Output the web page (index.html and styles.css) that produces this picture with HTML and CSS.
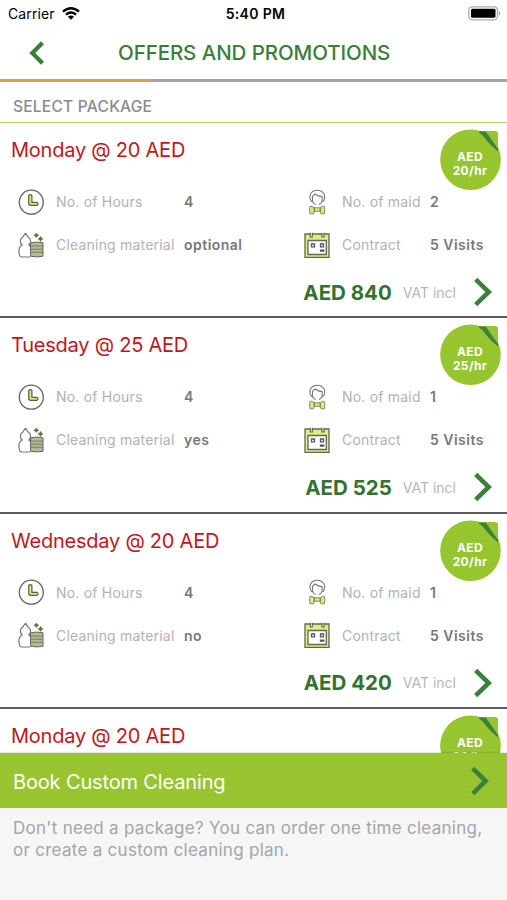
FILE: index.html
```html
<!DOCTYPE html>
<html lang="en">
<head>
<meta charset="utf-8">
<title>Offers and Promotions</title>
<link rel="stylesheet" href="styles.css">
</head>
<body>
<svg class="sprite" aria-hidden="true">
  <symbol id="clock" viewBox="0 0 26 26">
    <circle cx="13.3" cy="13.2" r="12" fill="#fff" stroke="#626262" stroke-width="1.3"/>
    <path d="M10.700 6.700q1.500-2.200 3.200 0v6.600h5q2.300 1.300 0 3h-6.200q-2 0-2-2z" fill="#dce96f" stroke="#5b5d49" stroke-width="1.200" stroke-linejoin="round"/>
  </symbol>
  <symbol id="material" viewBox="0 0 26 26">
    <path d="M7.500 1 4.600 5.300C2 6.500 1.500 11 4.300 13 1 14.300.6 19 1.300 22.500q.4 2.500 2.500 2.500h8.500M7.500 1l2.900 4.300c2.600 1.200 3.100 5.700.3 7.700q1.500.7 1.900 2" fill="none" stroke="#777" stroke-width="1.200" stroke-linejoin="round"/>
    <path d="M12.600 10.800q6-1.500 12.400 0v13.500q-6 1.200-12.400 0z" fill="#b4b997" stroke="#65675a"/>
    <path d="M12.800 14h12M12.800 17.200h12M12.800 20.300h12" stroke="#74776a" stroke-width=".9"/>
    <path d="M18.300 1l1 1.300 1.500 1-1.500.9-1 1.500-1-1.500-1.500-.9 1.500-1zM22.500 4.300l1 1.600 1.600 1-1.600 1-1 1.700-1-1.700-1.600-1 1.600-1z" fill="#63713a" stroke="#59623f" stroke-width=".4"/>
  </symbol>
  <symbol id="maid" viewBox="0 0 26 26">
    <path d="M7.800 12.800Q4.800 9 6.500 5 8.500 1.200 13.200 1.200T20 5q1.700 4-1 7.800M8.500 11V7.300L11 5q3 2.300 7.200 2.600V11M8.300 11q.4 3.500 3.400 4.500M18.300 11q-.4 3.500-3.400 4.500" fill="none" stroke="#777" stroke-width="1.100" stroke-linejoin="round"/>
    <path d="M6 17.500q2-1.200 4 1.300h6.400q2-2.500 4-1.300.9 2.500 0 7.300H17l-.9-2.600h-5.700l-.9 2.600H6q-.9-4.500 0-7.300z" fill="#dce879" stroke="#888a6b"/>
    <path d="M10.200 18.500v4M16.200 18.500v4" stroke="#686b54" stroke-width="1.100"/>
  </symbol>
  <symbol id="calendar" viewBox="0 0 26 26">
    <path d="M1 2h24v23.500H1z" fill="#e0ed80" stroke="#65674c" stroke-width="1.300"/>
    <path d="M4 8.500h18.300v14H4z" fill="#fff" stroke="#66665c" stroke-width="1.300"/>
    <path d="M6.300.7v4.300h2V.7M18 .7v4.300h2V.7" fill="#fff" stroke="#626650" stroke-width="1.200"/>
    <path d="M7.500 12h3v2.900h-3zM16.500 12h3v2.900h-3zM16.500 18.200h3.200v.9h-3.200z" fill="#fff" stroke="#555" stroke-width="1.300"/>
  </symbol>
  <symbol id="chevron" viewBox="0 0 18 30">
    <path d="M1.700 2.300 14.700 15 1.700 27.700" fill="none" stroke="currentColor" stroke-width="4.600"/>
  </symbol>
  <symbol id="badge" viewBox="0 0 61 61">
    <path d="M37 2h17.500q3.500 0 3.500 3.500V24z" fill="#96c52f"/>
    <circle cx="30.500" cy="30.700" r="30.300" fill="#96c52f"/>
    <path d="M38 2.500h8L58 17v5.500Q50 15.500 47.500 12.500 43 6 38 2.500z" fill="#3f803d"/>
    <path d="M45.500 2h9q3.500 0 3.500 3.500V20z" fill="#96c52f"/>
  </symbol>
</svg>

<div class="screen">
  <header>
    <div class="status">
      <div class="carrier">Carrier
        <svg class="wifi" viewBox="0 0 18 13"><path d="M1 4.700Q9-2.200 17 4.700M3.900 7.700q5.100-4.300 10.200 0" fill="none" stroke="#000" stroke-width="2.300"/><path d="M5.900 9.700q3.100-2.500 6.200 0L9 12.700z"/></svg>
      </div>
      <div class="time">5:40 PM</div>
      <svg class="battery" viewBox="0 0 33 15"><rect x=".8" y=".8" width="28.700" height="13" rx="3.500" fill="#fff" stroke="#aaa" stroke-width="1.300"/><rect x="3" y="2.800" width="24.500" height="9" rx="1.500"/><path d="M31 5q2 2.300 0 4.600z" fill="#888"/></svg>
    </div>
    <nav>
      <svg class="back" viewBox="0 0 16 24"><path d="M14.500 1.700 4.300 12l10.200 10.300" fill="none" stroke="currentColor" stroke-width="4.200"/></svg>
      <h1>OFFERS AND PROMOTIONS</h1>
    </nav>
    <div class="progress"><div class="done"></div></div>
    <h2>SELECT PACKAGE</h2>
  </header>

  <main>
    <article class="card">
      <h3>Monday @ 20 AED</h3>
      <div class="badge"><svg><use href="#badge"/></svg><span>AED<br>20/hr</span></div>
      <div class="facts">
        <svg><use href="#clock"/></svg><span>No. of Hours</span><b>4</b>
        <svg><use href="#maid"/></svg><span>No. of maid</span><b>2</b>
        <svg><use href="#material"/></svg><span>Cleaning material</span><b>optional</b>
        <svg><use href="#calendar"/></svg><span>Contract</span><b>5 Visits</b>
      </div>
      <div class="total"><strong>AED 840</strong><span>VAT incl</span><svg><use href="#chevron"/></svg></div>
    </article>
    <article class="card">
      <h3>Tuesday @ 25 AED</h3>
      <div class="badge"><svg><use href="#badge"/></svg><span>AED<br>25/hr</span></div>
      <div class="facts">
        <svg><use href="#clock"/></svg><span>No. of Hours</span><b>4</b>
        <svg><use href="#maid"/></svg><span>No. of maid</span><b>1</b>
        <svg><use href="#material"/></svg><span>Cleaning material</span><b>yes</b>
        <svg><use href="#calendar"/></svg><span>Contract</span><b>5 Visits</b>
      </div>
      <div class="total"><strong>AED 525</strong><span>VAT incl</span><svg><use href="#chevron"/></svg></div>
    </article>
    <article class="card">
      <h3>Wednesday @ 20 AED</h3>
      <div class="badge"><svg><use href="#badge"/></svg><span>AED<br>20/hr</span></div>
      <div class="facts">
        <svg><use href="#clock"/></svg><span>No. of Hours</span><b>4</b>
        <svg><use href="#maid"/></svg><span>No. of maid</span><b>1</b>
        <svg><use href="#material"/></svg><span>Cleaning material</span><b>no</b>
        <svg><use href="#calendar"/></svg><span>Contract</span><b>5 Visits</b>
      </div>
      <div class="total"><strong>AED 420</strong><span>VAT incl</span><svg><use href="#chevron"/></svg></div>
    </article>
    <article class="card">
      <h3>Monday @ 20 AED</h3>
      <div class="badge"><svg><use href="#badge"/></svg><span>AED<br>20/hr</span></div>
    </article>
  </main>

  <footer>
    <div class="custom"><span>Book Custom Cleaning</span><svg><use href="#chevron"/></svg></div>
    <p>Don't need a package? You can order one time cleaning,<br>or create a custom cleaning plan.</p>
  </footer>
</div>
</body>
</html>
```
FILE: styles.css
```css
* { box-sizing: border-box; }
body {
  margin: 0;
  background: #fff;
  font-family: Inter, "Liberation Sans", sans-serif;
  white-space: nowrap;
}
h1, h2, h3, p { margin: 0; font-weight: 400; }
svg { display: block; flex: none; }
.sprite { position: absolute; width: 0; height: 0; }
.screen { display: flex; flex-direction: column; height: 900px; overflow: hidden; }

header { flex: none; }
.status {
  display: grid;
  grid-template-columns: 1fr auto 1fr;
  align-items: center;
  height: 27px;
  padding: 0 6px 0 8px;
  font-size: 14px;
}
.carrier { display: flex; align-items: center; gap: 7px; letter-spacing: 0.1px; }
.wifi { width: 18px; height: 13px; }
.time { padding-left: 2px; font-weight: 600; font-size: 14px; letter-spacing: 0.35px; }
.battery { width: 33px; height: 15px; justify-self: end; }
nav { display: flex; align-items: center; height: 52px; padding-left: 28px; color: #3b7d39; }
.back { width: 16px; height: 24px; }
h1 { margin-left: 74px; padding-bottom: 2px; font-size: 20.5px; font-weight: 500; letter-spacing: -0.08px; }
.progress { height: 3px; background: #a5a3a3; }
.done { width: 152px; height: 3px; background: #e5994a; }
h2 {
  height: 41px;
  padding-left: 13px;
  border-bottom: 1.500px solid #b4cf62;
  color: #8b8b90;
  font-size: 15.5px;
  font-weight: 500;
  letter-spacing: 0.25px;
  line-height: 50px;
}

main { flex: 1; min-height: 0; overflow: hidden; }
.card { position: relative; height: 195.400px; border-bottom: 2px solid #5c5a5d; }
h3 {
  height: 57px;
  padding-left: 11px;
  color: #bd1822;
  font-size: 20px;
  letter-spacing: -0.23px;
  line-height: 54px;
}
.badge { position: absolute; top: 6px; right: 6px; width: 61px; height: 61px; }
.badge svg { width: 61px; height: 61px; }
.badge span {
  position: absolute;
  inset: 21px 1px auto 0;
  color: #fff;
  font-size: 12px;
  font-weight: 700;
  letter-spacing: 0.4px;
  line-height: 14px;
  text-align: center;
}
.facts {
  display: grid;
  grid-template-columns: 38px 128px 120px 38px 88px 1fr;
  grid-auto-rows: 43px;
  align-items: center;
  padding-left: 18px;
  color: #b2b2b2;
  font-size: 14px;
  letter-spacing: 0.2px;
}
.facts svg { width: 26px; height: 26px; }
.facts b { color: #77777a; font-weight: 600; letter-spacing: 0.48px; }
.total {
  display: flex;
  align-items: center;
  justify-content: flex-end;
  height: 52px;
  padding-right: 15px;
  color: #b5b5b8;
  font-size: 14px;
}
.total strong { margin-right: 11px; color: #34722f; font-size: 20.5px; font-weight: 700; }
.total svg { width: 18px; height: 30px; margin-left: 18px; color: #39803a; }

footer { flex: none; height: 147px; background: #f6f6f6; box-shadow: 0 0 2px rgba(0, 0, 0, 0.3); z-index: 1; }
.custom {
  display: flex;
  align-items: center;
  justify-content: space-between;
  height: 55px;
  padding: 0 18px 0 13px;
  background: #98c52f;
  color: #fff;
  font-size: 20px;
  letter-spacing: -0.15px;
}
.custom span { padding-top: 2px; }
.custom svg { width: 18px; height: 30px; color: #3e803a; }
footer p {
  padding: 10px 13px;
  color: #a5a5a8;
  font-size: 17px;
  letter-spacing: 0.28px;
  line-height: 21.5px;
}
```
